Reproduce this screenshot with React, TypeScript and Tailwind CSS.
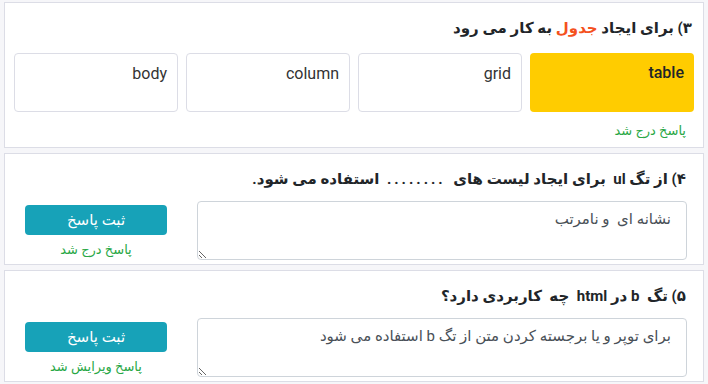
const font = { fontFamily: 'Roboto, "DejaVu Sans", sans-serif' };

const options = [
    { label: 'table', selected: true },
    { label: 'grid', selected: false },
    { label: 'column', selected: false },
    { label: 'body', selected: false },
];

function AnswerCard({
    title,
    answer,
    status,
}: {
    title: React.ReactNode;
    answer: string;
    status: string;
}) {
    return (
        <div className="bg-white border border-[#dcdde6] pt-[15px] pb-[4px] pr-[16px] pl-[19px]">
            <h3 className="text-[15px] font-bold text-[#212529] leading-[20px] pr-[1px]">{title}</h3>
            <div className="flex items-start gap-[30px] mt-[12px]">
                <textarea
                    readOnly
                    defaultValue={answer}
                    className="flex-1 h-[59px] border border-[#ced4da] rounded-[4px] px-[15px] py-[6px] text-[15px] text-[#495057] leading-[22px] bg-white outline-none"
                    style={font}
                />
                <div className="w-[142px] flex flex-col items-center mt-[4px] ml-[1px]">
                    <button className="w-full h-[30px] bg-[#17a2b8] text-white text-[15px] rounded-[4px]">
                        ثبت پاسخ
                    </button>
                    <span className="text-[13px] text-[#28a745] mt-[6px] leading-[18px]">{status}</span>
                </div>
            </div>
        </div>
    );
}

export default function App() {
    return (
        <div dir="rtl" className="w-[708px] h-[384px] bg-[#f6f6f9] pt-[2px] px-[4px] flex flex-col gap-[5px] overflow-hidden" style={font}>
            <div className="bg-white border border-[#dcdde6] pt-[15px] pb-[7px] px-[9px]">
                <h3 className="text-[15px] font-bold text-[#212529] leading-[20px] pr-[2px]">
                    ۳) برای ایجاد <span className="text-[#f4511e]">جدول</span> به کار می رود
                </h3>
                <div className="grid grid-cols-4 gap-[8px] mt-[15px]">
                    {options.map((o) => (
                        <div
                            key={o.label}
                            className={`h-[59px] rounded-[4px] px-[10px] pt-[8px] text-[16px] text-right ${o.selected
                                    ? 'bg-[#ffcc00] text-[#212529] font-medium'
                                    : 'bg-white border border-[#dcdde6] text-[#333]'
                                }`}
                        >
                            {o.label}
                        </div>
                    ))}
                </div>
                <div className="text-[13px] text-[#28a745] mt-[10px] pr-[8px] leading-[18px]">پاسخ درج شد</div>
            </div>

            <AnswerCard
                title={
                    <>
                        ۴) از تگ ul&nbsp; برای ایجاد لیست های &nbsp;
                        <span dir="ltr" className="inline-block tracking-[3px]">........</span>
                        &nbsp; استفاده می شود.
                    </>
                }
                answer="نشانه ای  و نامرتب"
                status="پاسخ درج شد"
            />

            <AnswerCard
                title={<>۵) تگ &nbsp;b در html&nbsp; چه &nbsp;کاربردی دارد؟</>}
                answer="برای توپر و یا برجسته کردن متن از تگ b استفاده می شود"
                status="پاسخ ویرایش شد"
            />
        </div>
    );
}
